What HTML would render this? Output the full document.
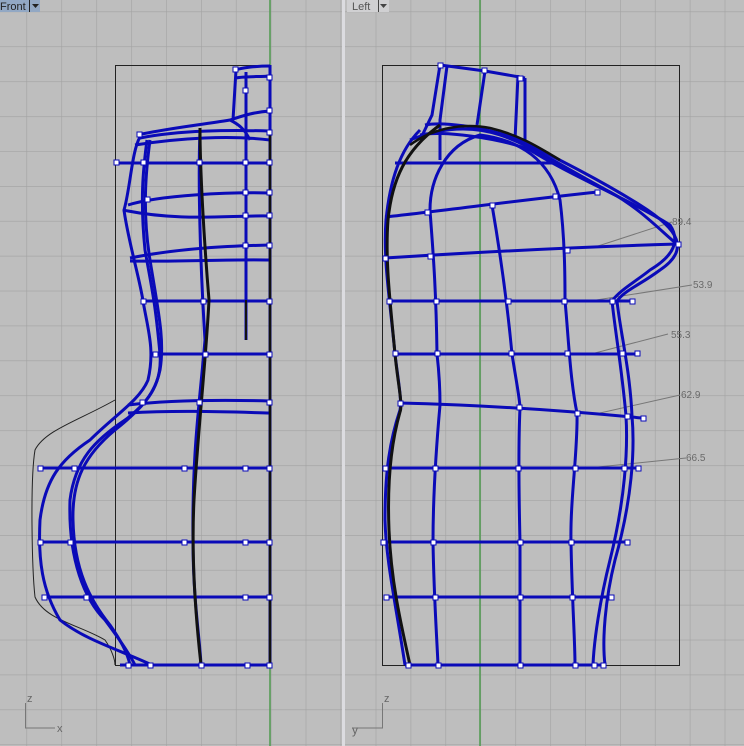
<!DOCTYPE html>
<html><head><meta charset="utf-8"><style>
html,body{margin:0;padding:0;background:#bebebe;}
svg{display:block;font-family:"Liberation Sans",sans-serif;}
</style></head><body>
<svg width="744" height="746" viewBox="0 0 744 746" xmlns="http://www.w3.org/2000/svg">
<defs>
<pattern id="g" x="26.5" y="11.5" width="34.9" height="34.9" patternUnits="userSpaceOnUse">
<path d="M0 0H34.9M0 0V34.9" stroke="#a2a2a2" stroke-width="1.2" fill="none"/>
</pattern>
<pattern id="g2" x="375.7" y="11.5" width="34.9" height="34.9" patternUnits="userSpaceOnUse">
<path d="M0 0H34.9M0 0V34.9" stroke="#a2a2a2" stroke-width="1.2" fill="none"/>
</pattern>
</defs>
<rect x="0" y="0" width="342" height="746" fill="#bebebe"/>
<rect x="0" y="0" width="342" height="746" fill="url(#g)"/>
<rect x="345" y="0" width="399" height="746" fill="#bebebe"/>
<rect x="345" y="0" width="399" height="746" fill="url(#g2)"/>
<rect x="342" y="0" width="3" height="746" fill="#dcdce0"/>
<line x1="270" y1="0" x2="270" y2="746" stroke="#4f9a4f" stroke-width="1.5"/>
<line x1="480" y1="0" x2="480" y2="746" stroke="#4f9a4f" stroke-width="1.5"/>

<!-- header tabs -->
<rect x="0" y="0" width="40" height="12" fill="#92a8c4"/>
<text x="0" y="10" font-size="11" fill="#222">Front</text>
<line x1="29.5" y1="0" x2="29.5" y2="12" stroke="#222"/>
<path d="M32 4h7l-3.5 4z" fill="#222"/>
<rect x="347" y="0" width="42" height="12" fill="#d0d0d2"/>
<text x="352" y="10" font-size="11" fill="#555">Left</text>
<line x1="378.5" y1="0" x2="378.5" y2="12" stroke="#444"/>
<path d="M380 4h7l-3.5 4z" fill="#444"/>

<!-- axis indicators -->
<g stroke="#777" fill="none" stroke-width="1"><path d="M25.5 703V728H55"/><path d="M382.5 703V728H352"/></g>
<text x="27" y="702" font-size="11" fill="#666">z</text>
<text x="57" y="732" font-size="11" fill="#666">x</text>
<text x="384" y="702" font-size="11" fill="#666">z</text>
<text x="352" y="734" font-size="12" fill="#666">y</text>

<!-- ===== FRONT VIEW ===== -->
<rect x="115.5" y="65.5" width="155" height="600" fill="none" stroke="#222" stroke-width="1"/>
<path d="M115 400C80 420 45 430 35 450C30 480 32 570 35 597C45 620 80 625 105 640C112 650 115 660 115 665" fill="none" stroke="#222" stroke-width="1"/>
<g fill="none" stroke="#0a0ab8" stroke-width="3">
<!-- rows -->
<path d="M117 163H270M128 205C160 195 230 192 270 193M123 210C180 222 230 215 270 216M130 258C180 248 230 246 270 245M130 261C180 262 230 259 270 260"/>
<path d="M143 301H270M150 354H270M128 405C170 400 230 400 270 401M128 413C180 410 230 412 270 413M40 468H270M40 542H270M44 597H270M120 665H270"/>
<!-- neck -->
<path d="M137 135C170 128 200 125 230 120C245 115 255 112 270 111M140 138C180 130 230 130 270 131M135 145C180 138 230 135 270 140M236 70C240 68 255 66 270 66M236 78C245 76 260 77 270 76M236 70L233 120M246 72V340M230 120C240 125 245 130 250 140"/>
<!-- outer contours -->
<path d="M140 137C132 150 130 190 124 210C128 240 140 280 143 301C148 330 155 350 148 380C140 400 115 415 90 440C60 460 45 480 40 520C38 560 42 590 60 620C85 640 120 650 152 665"/>
<path d="M147 140C143 170 140 200 145 250C152 290 155 300 160 354C162 380 152 400 125 420C95 440 75 460 70 500C68 560 85 600 105 620C120 640 130 655 135 665"/>
<path d="M150 140C146 170 142 210 150 260C158 310 165 340 160 370C155 395 140 410 115 430C85 455 72 480 73 520C74 570 90 600 110 625C122 642 128 655 130 665"/>
<path d="M200 130C198 180 200 260 205 340C200 400 192 450 193 540C193 600 200 640 201 665"/>
<path d="M270 65V665"/>
</g>
<path d="M200 128C200 170 204 240 209 300C206 360 198 430 194 500C191 560 196 620 201 665" fill="none" stroke="#111" stroke-width="3"/>
<path d="M270 130V665" fill="none" stroke="#111" stroke-width="2.5"/>
<path d="M246 300V340" fill="none" stroke="#111" stroke-width="2"/>
<g fill="#fff" stroke="#0a0ab8" stroke-width="1">
<rect x="114" y="160" width="5" height="5"/><rect x="141" y="160" width="5" height="5"/><rect x="197" y="160" width="5" height="5"/><rect x="243" y="160" width="5" height="5"/><rect x="267" y="160" width="5" height="5"/>
<rect x="243" y="190" width="5" height="5"/><rect x="267" y="190" width="5" height="5"/><rect x="145" y="197" width="5" height="5"/>
<rect x="243" y="213" width="5" height="5"/><rect x="267" y="213" width="5" height="5"/><rect x="243" y="243" width="5" height="5"/><rect x="267" y="243" width="5" height="5"/>
<rect x="141" y="299" width="5" height="5"/><rect x="201" y="299" width="5" height="5"/><rect x="267" y="299" width="5" height="5"/>
<rect x="153" y="352" width="5" height="5"/><rect x="203" y="352" width="5" height="5"/><rect x="267" y="352" width="5" height="5"/>
<rect x="140" y="400" width="5" height="5"/><rect x="197" y="400" width="5" height="5"/><rect x="267" y="400" width="5" height="5"/>
<rect x="38" y="466" width="5" height="5"/><rect x="72" y="466" width="5" height="5"/><rect x="182" y="466" width="5" height="5"/><rect x="243" y="466" width="5" height="5"/><rect x="267" y="466" width="5" height="5"/>
<rect x="38" y="540" width="5" height="5"/><rect x="68" y="540" width="5" height="5"/><rect x="182" y="540" width="5" height="5"/><rect x="243" y="540" width="5" height="5"/><rect x="267" y="540" width="5" height="5"/>
<rect x="42" y="595" width="5" height="5"/><rect x="84" y="595" width="5" height="5"/><rect x="243" y="595" width="5" height="5"/><rect x="267" y="595" width="5" height="5"/>
<rect x="126" y="663" width="5" height="5"/><rect x="148" y="663" width="5" height="5"/><rect x="199" y="663" width="5" height="5"/><rect x="245" y="663" width="5" height="5"/><rect x="267" y="663" width="5" height="5"/>
<rect x="233" y="67" width="5" height="5"/><rect x="243" y="88" width="5" height="5"/><rect x="267" y="75" width="5" height="5"/><rect x="267" y="108" width="5" height="5"/><rect x="267" y="130" width="5" height="5"/><rect x="137" y="132" width="5" height="5"/>
</g>

<!-- ===== LEFT VIEW ===== -->
<rect x="382.5" y="65.5" width="297" height="600" fill="none" stroke="#222" stroke-width="1"/>
<g fill="none" stroke="#777" stroke-width="1">
<path d="M595 247L672 222M590 301L692 285M595 353L668 334M600 413L680 395M598 467L686 458"/>
</g>
<g font-size="10" fill="#6a6a6a">
<text x="672" y="225">89.4</text><text x="693" y="288">53.9</text><text x="671" y="338">55.3</text><text x="681" y="398">62.9</text><text x="686" y="461">66.5</text>
</g>
<g fill="none" stroke="#0a0ab8" stroke-width="3">
<!-- neck -->
<path d="M440 65L485 71L525 78M440 65L432 115L420 140M447 66L440 120L440 160M485 71L477 125M518 75L515 140M525 78L525 140"/>
<!-- shoulder/front contour -->
<path d="M425 125C440 122 480 125 520 140C560 160 600 180 640 205C680 230 690 250 660 270C640 285 625 290 617 301C620 330 630 370 632 416C635 450 632 500 615 560C605 600 602 640 605 665"/>
<path d="M420 135C440 130 500 138 530 150C570 175 630 200 670 225C680 240 675 255 650 270C635 282 620 290 612 301C615 330 622 370 626 416C628 450 625 500 610 560C600 600 594 640 593 665"/>
<path d="M410 140C440 128 470 125 500 135C530 145 560 165 610 192C640 208 665 235 678 245"/>
<!-- columns -->
<path d="M430 210C430 180 445 145 480 135C520 140 550 160 560 200C565 240 565 280 565 301C568 330 570 380 577 413C578 450 570 500 571 542C572 600 575 640 575 665"/>
<path d="M430 210C432 240 436 280 437 354C440 380 440 400 440 405C436 450 433 500 433 542C434 600 437 640 438 665"/>
<path d="M492 205C498 240 506 290 512 354C516 380 520 400 520 408C518 450 519 500 520 542C520 600 520 640 520 665"/>
<!-- back -->
<path d="M420 130C400 150 390 180 386 220C383 260 390 300 395 354C398 380 402 400 400 410C390 440 385 470 385 520C386 560 395 600 405 665"/>
<!-- rows -->
<path d="M395 163H555M385 217C450 210 520 200 598 192M385 258C480 252 580 247 678 244M390 301H632M395 354H638M400 403C480 405 560 410 642 418M385 468H638M383 542H628M385 597H612M405 665H605"/>
</g>
<path d="M440 125C405 150 392 180 388 220C385 260 390 300 395 354C398 385 403 405 400 412C392 440 387 480 389 530C391 580 400 620 410 665" fill="none" stroke="#111" stroke-width="3"/>
<path d="M410 145C430 130 460 122 490 128C520 135 540 148 560 160" fill="none" stroke="#111" stroke-width="2.5"/>
<g fill="#fff" stroke="#0a0ab8" stroke-width="1">
<rect x="438" y="63" width="5" height="5"/><rect x="482" y="68" width="5" height="5"/><rect x="518" y="76" width="5" height="5"/>
<rect x="383" y="256" width="5" height="5"/><rect x="428" y="254" width="5" height="5"/><rect x="565" y="248" width="5" height="5"/><rect x="676" y="242" width="5" height="5"/>
<rect x="387" y="299" width="5" height="5"/><rect x="434" y="299" width="5" height="5"/><rect x="506" y="299" width="5" height="5"/><rect x="562" y="299" width="5" height="5"/><rect x="610" y="299" width="5" height="5"/><rect x="630" y="299" width="5" height="5"/>
<rect x="393" y="351" width="5" height="5"/><rect x="435" y="351" width="5" height="5"/><rect x="509" y="351" width="5" height="5"/><rect x="565" y="351" width="5" height="5"/><rect x="620" y="351" width="5" height="5"/><rect x="635" y="351" width="5" height="5"/>
<rect x="398" y="401" width="5" height="5"/><rect x="517" y="405" width="5" height="5"/><rect x="575" y="411" width="5" height="5"/><rect x="625" y="414" width="5" height="5"/><rect x="641" y="416" width="5" height="5"/>
<rect x="383" y="466" width="5" height="5"/><rect x="433" y="466" width="5" height="5"/><rect x="516" y="466" width="5" height="5"/><rect x="573" y="466" width="5" height="5"/><rect x="622" y="466" width="5" height="5"/><rect x="636" y="466" width="5" height="5"/>
<rect x="381" y="540" width="5" height="5"/><rect x="431" y="540" width="5" height="5"/><rect x="518" y="540" width="5" height="5"/><rect x="569" y="540" width="5" height="5"/><rect x="625" y="540" width="5" height="5"/>
<rect x="384" y="595" width="5" height="5"/><rect x="433" y="595" width="5" height="5"/><rect x="518" y="595" width="5" height="5"/><rect x="570" y="595" width="5" height="5"/><rect x="609" y="595" width="5" height="5"/>
<rect x="406" y="663" width="5" height="5"/><rect x="436" y="663" width="5" height="5"/><rect x="518" y="663" width="5" height="5"/><rect x="573" y="663" width="5" height="5"/><rect x="592" y="663" width="5" height="5"/><rect x="601" y="663" width="5" height="5"/>
<rect x="425" y="210" width="5" height="5"/><rect x="490" y="203" width="5" height="5"/><rect x="553" y="194" width="5" height="5"/><rect x="595" y="190" width="5" height="5"/>
</g>
</svg>
</body></html>
